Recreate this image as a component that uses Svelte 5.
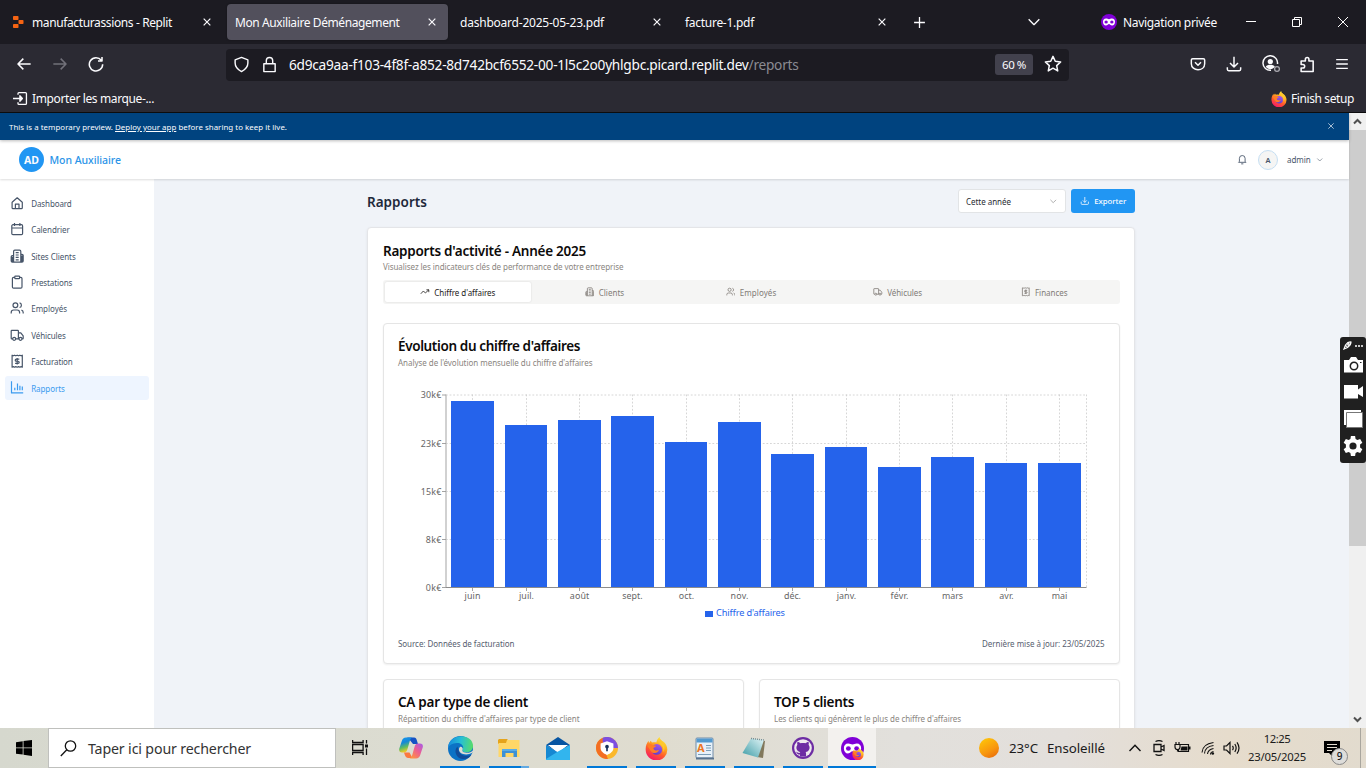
<script>
  // Tunes letter spacing so a label occupies its designed width.
  function fit(node, width) {
    const apply = (w) => {
      node.style.letterSpacing = '0px';
      const natural = node.getBoundingClientRect().width;
      const n = Math.max(1, node.textContent.length);
      node.style.letterSpacing = (w - natural) / n + 'px';
    };
    apply(width);
    return { update: apply };
  }

  const P = {
    home: 'M3.5 10.5 12 3l8.5 7.5M3.5 10v9.5a1.5 1.5 0 0 0 1.500 1.500h14a1.500 1.500 0 0 0 1.500-1.500V10M9 21v-7.500h6V21',
    calendar: 'M5 4.500h14a2 2 0 0 1 2 2V19a2 2 0 0 1-2 2H5a2 2 0 0 1-2-2V6.500a2 2 0 0 1 2-2zM7.500 1.500v5M16.500 1.500v5M3 10h18',
    building: 'M6 22V4a2 2 0 0 1 2-2h8a2 2 0 0 1 2 2v18zM6 11H4a2 2 0 0 0-2 2v7a2 2 0 0 0 2 2h2M18 9h2a2 2 0 0 1 2 2v9a2 2 0 0 1-2 2h-2M9.500 6h5M9.500 10h5M9.500 14h5M9.500 18h5M4 13v8M20 11v10',
    clipboard: 'M9 2h6a1 1 0 0 1 1 1v2a1 1 0 0 1-1 1H9a1 1 0 0 1-1-1V3a1 1 0 0 1 1-1zM16 4h2a2 2 0 0 1 2 2v14a2 2 0 0 1-2 2H6a2 2 0 0 1-2-2V6a2 2 0 0 1 2-2h2',
    users: 'M16 21v-2a4 4 0 0 0-4-4H6a4 4 0 0 0-4 4v2M9 3a4 4 0 1 0 0 8a4 4 0 0 0 0-8M22 21v-2a4 4 0 0 0-3-3.870M16 3.130a4 4 0 0 1 0 7.750',
    truck: 'M4.500 18H3a1 1 0 0 1-1-1V5a1 1 0 0 1 1-1h10a1 1 0 0 1 1 1v13H9.500M14 8h4l4 5v4a1 1 0 0 1-1 1h-1.500M14.500 18h1M7 15.500a2.500 2.500 0 1 0 0 5a2.500 2.500 0 0 0 0-5M17.500 15.500a2.500 2.500 0 1 0 0 5a2.500 2.500 0 0 0 0-5',
    bill: 'M3.500 2v20l2-1 2 1 2.200-1 2.300 1 2.300-1 2.200 1 2-1 2 1V2l-2 1-2-1-2.200 1L12 2 9.700 3 7.500 2l-2 1zM15.500 8.500h-5a1.800 1.800 0 0 0 0 3.600h3a1.800 1.800 0 0 1 0 3.600h-5M12 6.500v11',
    chart: 'M2.500 2v19.500H22M8 17v-4M12.500 17V6M16.500 17V9.500M20.500 17v-6',
    trend: 'm2 17 6.500-7 5 5L22 7M16 7h6v6',
    down: 'M3 14v5a2 2 0 0 0 2 2h14a2 2 0 0 0 2-2v-5M12 2.500V16M7 11l5 5 5-5',
    bell: 'M5.500 10a6.500 6.500 0 0 1 13 0v7l2 2h-17l2-2zM9.500 22.500h5',
    chev: 'm4 8 8 8 8-8',
    x: 'm4 4 16 16M20 4 4 20',
    plus: 'M12 2v20M2 12h20',
    left: 'M22 12H3M11 4l-8 8 8 8',
    right: 'M2 12h19M13 4l8 8-8 8',
    reload: 'M20 6.500A10 10 0 1 0 22 12.500M21 1.500v6h-6',
    shield: 'M12 2 21 5.500V10c0 6-4 9.500-9 12-5-2.500-9-6-9-12V5.500z',
    lock: 'M4 11h16v11H4zM7.500 11V6.500a4.500 4.500 0 0 1 9 0V11',
    star: 'm12 1.800 3 6.600 7.200.8-5.300 4.900 1.400 7.100L12 17.600l-6.300 3.600 1.400-7.100-5.300-4.900 7.200-.8z',
    pocket: 'M4 4h16a2 2 0 0 1 2 2v5.500c0 12-20 12-20 0V6a2 2 0 0 1 2-2zM7.500 9.500l4.500 4.500 4.500-4.500',
    dl: 'M12 1v15M6 10.500l6 6 6-6M2 17v3a2 2 0 0 0 2 2h16a2 2 0 0 0 2-2v-3',
    puzzle: 'M3 22V17h2.500a2.500 2.500 0 0 0 0-5H3V7h6V4.500a2.500 2.500 0 0 1 5 0V7h6v15z',
    menu: 'M2 4.500h20M2 12h20M2 19.500h20',
    importer: 'M8 6V4a1.500 1.500 0 0 1 1.500-1.500H20A1.500 1.500 0 0 1 21.500 4v16a1.500 1.500 0 0 1-1.500 1.500H9.500A1.500 1.500 0 0 1 8 20v-2M0 12h14M11 7.500l4 4.500-4 4.500z'
  };

  const nav = [
    ['home', 'Dashboard', 40.5], ['calendar', 'Calendrier', 38.5], ['building', 'Sites Clients', 44.5],
    ['clipboard', 'Prestations', 41], ['users', 'Employés', 36], ['truck', 'Véhicules', 34.5],
    ['bill', 'Facturation', 41.5], ['chart', 'Rapports', 33.5]
  ];
  const tabs = [
    ['trend', "Chiffre d'affaires", 61], ['building', 'Clients', 25.5], ['users', 'Employés', 36.5],
    ['truck', 'Véhicules', 35], ['bill', 'Finances', 32.5]
  ];
  const months = [
    ['juin', 451, 494, 401, 16], ['juil.', 505, 547, 425, 15], ['août', 558, 601, 420, 19.5],
    ['sept.', 611, 654, 416, 20.5], ['oct.', 665, 707, 442, 15.500], ['nov.', 718, 761, 422, 18],
    ['déc.', 771, 814, 454, 17], ['janv.', 825, 867, 447, 19.500], ['févr.', 878, 921, 467, 18],
    ['mars', 931, 974, 457, 21], ['avr.', 985, 1027, 463, 14.500], ['mai', 1038, 1081, 463, 15.500]
  ];
  const ticks = [['30k€', 395], ['23k€', 443.5], ['15k€', 491.5], ['8k€', 539.5], ['0k€', 587.5]];
  const apps = ['copilot', 'edge', 'files', 'mail', 'guard', 'firefox', 'wordpad', 'notepad', 'github', 'private'];
</script>

{#snippet icon(name, size, sw = 2)}
  <svg class="ic" width={size} height={size} viewBox="0 0 24 24" fill="none" stroke="currentColor" stroke-width={sw} stroke-linejoin="round"><path d={P[name]} /></svg>
{/snippet}

{#snippet firefox(size)}
  <svg class="ic" width={size} height={size} viewBox="0 0 24 24">
    <defs>
      <linearGradient id="ffx" x1=".8" y1="0" x2=".3" y2="1"><stop offset="0" stop-color="#fff044" /><stop offset=".35" stop-color="#ffb01f" /><stop offset=".65" stop-color="#ff5a2c" /><stop offset="1" stop-color="#f5156c" /></linearGradient>
      <linearGradient id="ffp" x1=".7" y1="0" x2=".3" y2="1"><stop offset="0" stop-color="#a259e8" /><stop offset="1" stop-color="#5b3bd0" /></linearGradient>
    </defs>
    <path fill="url(#ffx)" d="M15.500 0c-.2 2 .8 3.200 2.200 4.300l1.300.4c2.600 2 4.300 5 4.300 8.300A11.300 11.300 0 0 1 .7 13.400C.5 9 2 6.300 3.600 4l.6 2.200L6 3.800l1.300 2c2-.6 3.200-.5 4.600 0 .1-2.300 1.500-4.500 3.600-5.800z" />
    <circle cx="12.300" cy="13" r="5.600" fill="url(#ffp)" />
    <path fill="#ff7d25" d="M2.500 9.500C4 7.500 6.500 7.200 8 8.300c1.400.3 3 .4 3.600 1.200-.4 1.200-2.600 1.300-2.900 2.400 1 2.500 3.800 2.300 6 1.700-1.400 3.900-6.500 4.200-8.700.9-1-1.700-2.200-3-3.500-5z" />
    <path fill="#ffc72e" d="M15.500 2c4.800 3.300 6.500 9.700 3.500 14 .8-4-.3-7-4-9z" />
  </svg>
{/snippet}

{#snippet mask(size)}
  <svg class="ic" width={size} height={size} viewBox="0 0 24 24">
    <circle cx="12" cy="12" r="12" fill="#8000d7" />
    <path fill="#fff" d="M7.500 6.800c2 0 3 .9 4.500.9s2.500-.9 4.500-.9c3 0 4.500 2.200 4.500 4.900 0 3.300-1.800 5.500-4.300 5.500-2.600 0-3.200-2.300-4.700-2.300s-2.100 2.300-4.700 2.300C4.800 17.200 3 15 3 11.700c0-2.700 1.500-4.900 4.500-4.900z" />
    <ellipse cx="7.700" cy="12" rx="2.500" ry="2.300" fill="#8000d7" /><ellipse cx="16.300" cy="12" rx="2.500" ry="2.300" fill="#8000d7" />
  </svg>
{/snippet}

<div class="screen">
  <div class="tabstrip">
    <div class="tab first">
      <svg class="fav" width="11" height="12" viewBox="0 0 11 12" fill="#f56413"><rect x="0" y="0" width="5.500" height="4" rx=".8" /><rect x="5.500" y="4" width="5" height="4" rx=".8" /><rect x="0" y="8" width="5.500" height="4" rx=".8" /></svg>
      <span use:fit={140}>manufacturassions - Replit</span><i>{@render icon('x', 10, 2.8)}</i>
    </div>
    <div class="tab on"><span use:fit={164.500}>Mon Auxiliaire Déménagement</span><i>{@render icon('x', 10, 2.8)}</i></div>
    <div class="tab"><span use:fit={144}>dashboard-2025-05-23.pdf</span><i>{@render icon('x', 10, 2.8)}</i></div>
    <div class="tab"><span use:fit={69}>facture-1.pdf</span><i>{@render icon('x', 10, 2.8)}</i></div>
    <div class="plus">{@render icon('plus', 13, 2.4)}</div>
    <div class="tabdown">{@render icon('chev', 16, 2)}</div>
    <div class="priv">{@render mask(16)}<span use:fit={94}>Navigation privée</span></div>
    <div class="win">
      <svg width="10" height="10"><path d="M0 4.500h10" stroke="#fff" /></svg>
      <svg width="10" height="10" fill="none" stroke="#fff"><path d="M.5 2.500h7v7h-7zM2.500 2.500v-2h7v7h-2" /></svg>
      <svg width="10" height="10" fill="none" stroke="#fff"><path d="m0 0 10 10M10 0 0 10" /></svg>
    </div>
  </div>

  <div class="toolbar">
    <div class="navs">
      <span>{@render icon('left', 16, 2.300)}</span><span class="dim">{@render icon('right', 16, 2.300)}</span><span>{@render icon('reload', 16, 2.300)}</span>
    </div>
    <div class="url">
      {@render icon('shield', 17, 2)}
      {@render icon('lock', 17, 2)}
      <div class="addr"><span use:fit={509.500}>6d9ca9aa-f103-4f8f-a852-8d742bcf6552-00-1l5c2o0yhlgbc.picard.replit.dev<em>/reports</em></span></div>
      <b class="zoom"><span use:fit={24}>60 %</span></b>
      {@render icon('star', 18, 2)}
    </div>
    <div class="tools">
      {@render icon('pocket', 16, 2.200)}
      {@render icon('dl', 16, 2.200)}
      <svg class="ic" width="19" height="18" viewBox="0 0 19 18" fill="none" stroke="#fbfbfe" stroke-width="1.500"><path d="M15.500 9A7.300 7.300 0 1 0 9 15.300" /><circle cx="8.300" cy="6.500" r="2.600" fill="#fbfbfe" stroke="none" /><path d="M3.800 11.500c1.500-2.300 7.500-2.300 9 0-2 3.500-7 3.500-9 0z" fill="#fbfbfe" stroke="none" /><circle cx="15" cy="14" r="2.400" stroke="#aaa9b0" stroke-width="1.300" /></svg>
      {@render icon('puzzle', 17, 2.200)}
      {@render icon('menu', 14, 2.400)}
    </div>
  </div>

  <div class="marks">
    {@render icon('importer', 15, 2.100)}<span use:fit={122}>Importer les marque-...</span>
    <div class="finish">{@render firefox(16)}<span use:fit={63}>Finish setup</span></div>
  </div>

  <div class="view">
    <div class="page">
      <div class="banner">
        <p use:fit={278}>This is a temporary preview. <u>Deploy your app</u> before sharing to keep it live.</p>
        {@render icon('x', 8, 2.500)}
      </div>
      <header>
        <div class="logo"><span use:fit={15}>AD</span></div>
        <strong><span use:fit={71.500}>Mon Auxiliaire</span></strong>
        <div class="account">
          {@render icon('bell', 10.500, 2)}
          <div class="avatar">A</div>
          <span use:fit={23.500}>admin</span>
          {@render icon('chev', 7.500, 1.800)}
        </div>
      </header>
      <div class="body">
        <aside>
          {#each nav as [ico, label, w], i}
            <div class="item" class:active={i === 7}>{@render icon(ico, 14.400, 2)}<span use:fit={w}>{label}</span></div>
          {/each}
        </aside>
        <main>
          <div class="head">
            <h1><span use:fit={60}>Rapports</span></h1>
            <div class="select"><span use:fit={45}>Cette année</span>{@render icon('chev', 8.500, 1.900)}</div>
            <div class="export">{@render icon('down', 9.600, 2)}<span use:fit={32}>Exporter</span></div>
          </div>
          <section class="card">
            <h2><span use:fit={203}>Rapports d'activité - Année 2025</span></h2>
            <p class="sub"><span use:fit={240.500}>Visualisez les indicateurs clés de performance de votre entreprise</span></p>
            <div class="tablist">
              {#each tabs as [ico, label, w], i}
                <div class="seg" class:sel={i === 0}>{@render icon(ico, 9.600, 2)}<span use:fit={w}>{label}</span></div>
              {/each}
            </div>
            <article class="panel">
              <h2><span use:fit={182}>Évolution du chiffre d'affaires</span></h2>
              <p class="sub"><span use:fit={194.500}>Analyse de l'évolution mensuelle du chiffre d'affaires</span></p>
              <svg class="chart" width="707" height="250" viewBox="398 380 707 250">
                <g stroke="#ccc" stroke-width=".8" stroke-dasharray="1.800 1.800" fill="none">
                  {#each ticks as [, y]}<path d="M446 {y}H1086.500" />{/each}
                  {#each months as [, a]}<path d="M{a + 21.500} 394.500V587.500" />{/each}
                  <path d="M1086.500 394.500V587.500" />
                </g>
                {#each months as [, a, b, top]}
                  <rect x={a} y={top} width={b - a} height={588 - top} fill="#2563eb" shape-rendering="crispEdges" />
                {/each}
                <path d="M446 394.500V587.500" stroke="#c6c6c6" stroke-width="1.600" />
                <path d="M446 587.500H1086.500" stroke="#8c8c8c" />
                {#each ticks as [t, y]}
                  <path d="M442 {y}h4" stroke="#999" stroke-width=".9" />
                  <text x="441.300" y={y + 3} text-anchor="end" textLength={t.length === 4 ? 20.500 : 15.500}>{t}</text>
                {/each}
                {#each months as [m, a, , , w]}
                  <path d="M{a + 21.500} 588v3" stroke="#999" stroke-width=".9" />
                  <text x={a + 21.500 - w / 2} y="599" textLength={w}>{m}</text>
                {/each}
                <rect x="705" y="611" width="8" height="6" fill="#2563eb" />
                <text x="716" y="616" class="leg" textLength="69">Chiffre d'affaires</text>
              </svg>
              <div class="foot"><span use:fit={116.500}>Source: Données de facturation</span><span use:fit={122.500}>Dernière mise à jour: 23/05/2025</span></div>
            </article>
            <div class="pair">
              <article class="panel">
                <h2><span use:fit={130}>CA par type de client</span></h2>
                <p class="sub"><span use:fit={181.500}>Répartition du chiffre d'affaires par type de client</span></p>
              </article>
              <article class="panel">
                <h2><span use:fit={80}>TOP 5 clients</span></h2>
                <p class="sub"><span use:fit={187}>Les clients qui génèrent le plus de chiffre d'affaires</span></p>
              </article>
            </div>
          </section>
        </main>
      </div>
    </div>
    <div class="scroll">
      <svg width="17" height="17" fill="none" stroke="#505050" stroke-width="2"><path d="m5 10.500 3.500-3.500L12 10.500" /></svg>
      <div class="thumb"></div>
      <svg class="bot" width="17" height="17" fill="none" stroke="#505050" stroke-width="2"><path d="m5 6.500 3.500 3.500L12 6.500" /></svg>
    </div>
  </div>

  <div class="taskbar">
    <div class="start"><svg width="16" height="16"><path d="M0 2.200 6.700 1.300v6.200H0zM7.500 1.100 16 0v7.500H7.500zM0 8.300h6.700v6.300L0 13.700zM7.500 8.300H16V16l-8.500-1.200z" /></svg></div>
    <div class="search">
      <svg width="17" height="17" fill="none" stroke="#111" stroke-width="1.300"><circle cx="10.500" cy="6" r="5.200" /><path d="M6.800 9.800.8 16" /></svg>
      <span use:fit={163}>Taper ici pour rechercher</span>
    </div>
    <div class="view-btn"><svg width="17" height="17" fill="none" stroke="#111" stroke-width="1.300"><path d="M.6 1v2.500h10.500V1M.6 16v-2.500h10.500V16M.6 5.500h10.500v6H.6zM14.500 1v3.500M14.500 9.500V16" /><path d="M13 5.500h3v3h-3z" fill="#111" stroke="none" /></svg></div>
    <div class="apps">
      {#each apps as a}
        <div class="app {a}">
          {#if a === 'copilot'}
            <svg width="24" height="22" viewBox="0 0 24 22">
              <defs>
                <linearGradient id="c1" x2=".3" y2="1"><stop stop-color="#189af0" /><stop offset=".4" stop-color="#1588d8" /><stop offset=".7" stop-color="#5ebc63" /><stop offset="1" stop-color="#f4cb24" /></linearGradient>
                <linearGradient id="c2" x1="1" x2=".2" y2="1"><stop stop-color="#a65bea" /><stop offset=".5" stop-color="#ed5f91" /><stop offset="1" stop-color="#ff9440" /></linearGradient>
              </defs>
              <path fill="#1552c4" d="M8 .5h7c2 0 2.500 1.500 3.200 4l.8 2.500h-5L10 2z" />
              <path fill="url(#c1)" d="M7 .5h6.500c-1.700.5-2.300 2-2.800 3.800L8.500 12c-.6 2-1.400 3.500-3.500 3.500H3C.5 15.500-.3 13.700.3 11.500L2.800 4C3.500 1.800 4.600.5 7 .5z" />
              <path fill="#fb7940" d="M5 15.500h5.500l3 5.500H9c-2.200 0-3-2.300-4-5.500z" />
              <path fill="url(#c2)" d="M17 21.500h-6.500c1.700-.5 2.300-2 2.800-3.800L15.500 10c.6-2 1.400-3.500 3.500-3.500h2c2.500 0 3.300 1.800 2.700 4L21.200 18c-.7 2.200-1.800 3.500-4.200 3.500z" />
            </svg>
          {:else if a === 'edge'}
            <svg width="25" height="25" viewBox="0 0 24 24">
              <defs><linearGradient id="e1" y1=".4" y2=".5"><stop stop-color="#1689dd" /><stop offset=".5" stop-color="#27bfd4" /><stop offset="1" stop-color="#58dc69" /></linearGradient></defs>
              <circle cx="12" cy="12" r="12" fill="#0c72c5" />
              <path fill="url(#e1)" d="M0 11C1-3.500 24-3 24 9.500c0 4.500-4 6.500-7.500 6-2-.3-3.500-1.300-2.500-2.700C16 9.500 12.500 6.500 8.500 6.700 4 7 1.200 9 0 11z" />
              <path fill="#124d99" d="M9 10c-4 4-1 11.500 5 12 4 .3 7-1.500 8.500-4-5 2.500-12 .5-12.500-5z" />
              <path fill="#deddd2" d="M11.500 10.500c-2 2-1 5.500 3 6.800 3 .9 6 .3 8.300-.9.7-.4 1.200-.9 1.200-1.500v-1c-2 2-5 2.600-7.500 2-2-.5-3.500-1.500-2.500-3 .6-1.200-.8-3-2.500-2.400z" />
            </svg>
          {:else if a === 'files'}
            <svg width="22" height="20" viewBox="0 0 22 20"><path fill="#e5a41b" d="M1 1h8.500v5H0V2z" /><path fill="#ffd767" d="M9 2h12.500v17H.500V5H8z" /><path fill="#3c91d6" d="M4 11h15v8h-3.500v-4h-8v4H4z" /><path fill="#59ade7" d="M4 11h15v2H4z" /></svg>
          {:else if a === 'mail'}
            <svg width="24" height="23" viewBox="0 0 24 23"><path fill="#0755a2" d="M0 8 12 0l12 8-12 8z" /><path fill="#fff" d="M2 8h20l-10 8z" /><path fill="#1688d2" d="m0 8 12 7.500L24 8v15H0z" /><path fill="#32b5ee" d="m0 22 12-7.500L24 8v15H0z" /></svg>
          {:else if a === 'guard'}
            <svg width="22" height="22" viewBox="0 0 24 24"><circle cx="12" cy="12" r="12" fill="#fbb82b" /><path fill="#7d4fe0" d="M7 1a12 12 0 0 1 17 11h-5L6 7z" /><path fill="#f36e23" d="M0 12A12 12 0 0 1 7 1l1 9 5 14A12 12 0 0 1 0 12z" /><path fill="#fff" d="m12 4.500 7 2.500v5c0 3.500-3 6-7 7.500-4-1.500-7-4-7-7.500V7z" /><circle cx="12" cy="10.500" r="2" fill="#17325c" /><path stroke="#17325c" stroke-width="1.800" d="M12 11v4.500" /></svg>
          {:else if a === 'firefox'}
            {@render firefox(23)}
          {:else if a === 'wordpad'}
            <svg width="20" height="23" viewBox="0 0 20 23"><rect x="1" y="1" width="17" height="20" rx="1" fill="#e7f1f9" stroke="#718ca8" /><path fill="#5299ce" d="M1.500 1.500h16v4h-16z" /><path stroke="#7b9eb8" d="M11 8.500h5M11 11h5M11 13.500h5M3 17.500h13" /><text x="2" y="14.500" class="wp">A</text><path stroke="#59738f" stroke-width="2" d="M1 21.500h18" /></svg>
          {:else if a === 'notepad'}
            <svg width="24" height="23" viewBox="0 0 24 23"><defs><linearGradient id="n1" x1="1" x2="0" y2="1"><stop stop-color="#e3f6f8" /><stop offset="1" stop-color="#3c9ba5" /></linearGradient></defs><path fill="#81785c" d="m19 3 4 1-2 17-6-1z" /><path fill="url(#n1)" d="M9 1.500 22 3l-6 17.500L.500 16z" /><path stroke="#758c91" stroke-width="1.500" stroke-dasharray="1 1" d="m9 1.500 13 1.500" /></svg>
          {:else if a === 'github'}
            <svg width="22" height="22" viewBox="0 0 24 24"><circle cx="12" cy="12" r="12" fill="#6d2ca3" /><circle cx="12" cy="12" r="9.600" fill="#eee9ee" /><path fill="#6d2ca3" d="M6 5.500c1.500 0 2.500.8 3.300 1.400 1.700-.5 3.700-.5 5.400 0 .8-.6 1.800-1.400 3.300-1.400.5 1.300.4 2.300.1 3 2.300 3.300.8 7.500-3.300 7.900.6.800.6 1.600.6 5H8.600v-2.300c-3.300.6-3.200-2.500-4.600-3 2-.4 2.500 2 4.600 1.200.1-.4.300-.7.500-.9-4-.5-5.500-4.600-3.200-7.900-.3-.7-.4-1.700.1-3z" /></svg>
          {:else}
            {@render mask(23)}<div class="mini">{@render firefox(12)}</div>
          {/if}
        </div>
      {/each}
    </div>
    <div class="sun"></div>
    <span class="temp" use:fit={29}>23°C</span>
    <span class="weather" use:fit={58}>Ensoleillé</span>
    <div class="tray">
      <svg width="12" height="8" fill="none" stroke="#111" stroke-width="1.400"><path d="M.5 7 6 1.200 11.500 7" /></svg>
      <svg width="12" height="16" fill="none" stroke="#111" stroke-width="1.300"><path d="M1 4.500h7v7H1zM8 7l3-1.500v5L8 9M2.500 1.500q3.500-1.700 7 0M2.500 14.500q3.500 1.700 7 0" /></svg>
      <svg width="17" height="12" fill="none" stroke="#111" stroke-width="1.200"><path d="M6 2.500h8.500v7H4.500V8M2 0v2.500M5 0v2.500M1 2.500h5V5a2 2 0 0 1-5 0zM3.500 7v2.500" /><path d="M7.500 4.500h6v4h-7zM15 4.500h1.500v3H15z" fill="#111" stroke="none" /></svg>
      <svg width="14" height="14" fill="none" stroke="#111" stroke-width="1.100"><path d="M1 11.500Q1.500 3 12.500 1.500M3.500 12.500Q4 5.500 12.500 4.500M6.500 13Q7 8.500 12.500 7.500M9.500 13.500q0-2.500 3-3" /><circle cx="11.800" cy="12.500" r="1.300" fill="#111" stroke="none" /></svg>
      <svg width="17" height="14" fill="none" stroke="#111" stroke-width="1.200"><path d="M1 5h2.500L7 1.500v11L3.500 9H1zM9.500 4.800q1.500 2.200 0 4.400M11.800 3q2.700 4 0 8M14 1.300q4 5.700 0 11.400" /></svg>
    </div>
    <div class="clock"><span use:fit={26.500}>12:25</span><span use:fit={58}>23/05/2025</span></div>
    <div class="notif"><svg width="16" height="15"><path d="M0 0h16v12H8v3l-3-3H0z" /><path stroke="#e3dccf" d="M3 3.500h10M3 6.500h10M3 9.500h5" /></svg><b>9</b></div>
    <div class="edge-line"></div>
  </div>

  <div class="capture">
    <div class="top"><svg width="9" height="9" fill="none" stroke="#fff" stroke-width="1.200"><path d="m1 8 1.500-4Q5 .5 8 1q0 3-3.500 5.500zM2.500 4l2 2.500" /><circle cx="5.500" cy="3.500" r=".8" /></svg><i></i><i></i><i></i></div>
    <svg width="19" height="16"><path fill="#fff" d="M0 3h5l2-3h5l2 3h5v12.500H0z" /><circle cx="10" cy="9" r="3.700" fill="none" stroke="#222" stroke-width="1.500" /><path fill="#222" d="M16 5h1.500v1H16z" /></svg>
    <svg width="19" height="14"><path fill="#fff" d="M0 0h14v4.500L19 1v11l-5-3v4.500H0z" /></svg>
    <svg width="19" height="18"><path fill="#fff" d="M0 0h17v3H3v12H0z" /><path fill="#fff" stroke="#777" d="M2.500 2.500h16v15h-16z" /></svg>
    <svg width="20" height="20" viewBox="0 0 24 24"><path fill="#fff" fill-rule="evenodd" d="m9.500 0-.6 3.500-2.200 1.200-3.300-1.200L.8 8l2.700 2.300v3.400L.8 16l2.600 4.500 3.300-1.200 2.200 1.200.6 3.500h5l.6-3.500 2.200-1.200 3.300 1.200 2.600-4.500-2.700-2.300v-3.400L23.200 8l-2.600-4.500-3.300 1.200-2.200-1.200-.6-3.500zM12 7.700a4.300 4.300 0 1 1 0 8.600 4.300 4.300 0 0 1 0-8.600" /></svg>
  </div>
</div>

<style>
  :global(body) { margin: 0; overflow: hidden; }
  * { box-sizing: border-box; }
  .screen { position: relative; width: 1366px; height: 768px; overflow: hidden; display: flex; flex-direction: column; font-family: "Noto Sans", "Open Sans", sans-serif; font-size: 12px; color: #fbfbfe; white-space: nowrap; }
  h1, h2, p { margin: 0; }
  span { display: inline-block; flex: none; }
  .ic { display: block; flex: none; }
  svg { flex: none; }

  .tabstrip { height: 44px; flex: none; background: #1c1b22; display: flex; align-items: center; padding-left: 2px; gap: 4px; }
  .tab { width: 221px; height: 36px; flex: none; display: flex; align-items: center; padding: 0 11px 0 8px; border-radius: 4px; }
  .tab i { margin-left: auto; }
  .tab.on { background: #52505c; box-shadow: 0 0 2px #0006; }
  .tab.first { padding-left: 11px; }
  .fav { margin-right: 8px; }
  .plus { margin-left: 11px; width: 13px; }
  .tabdown { margin-left: 96px; }
  .priv { margin-left: 55px; display: flex; align-items: center; gap: 6px; }
  .win { display: flex; margin-left: 25px; gap: 36px; }

  .toolbar { height: 42px; flex: none; background: #2b2a33; display: flex; align-items: center; }
  .navs { display: flex; gap: 20px; padding: 0 0 2px 16px; width: 226px; }
  .dim { color: #72717a; }
  .url { width: 843px; height: 32px; background: #1c1b22; border-radius: 4px; display: flex; align-items: center; padding: 0 0 2px 7px; gap: 11px; }
  .addr { width: 510px; margin-right: 185px; font-size: 13.700px; color: #fbfbfe; padding-top: 1px; }
  .addr em { font-style: normal; color: #8b8b92; }
  .zoom { width: 38px; height: 21px; background: #42414d; border-radius: 3px; display: flex; justify-content: center; align-items: center; font-weight: 400; font-size: 11.500px; }
  .tools { margin-left: 121px; padding-bottom: 2px; display: flex; align-items: center; gap: 20px; }
  .tools > :global(:nth-child(4)) { margin-left: -2px; }
  .tools > :global(:nth-child(5)) { margin-left: -1px; }
  .marks { height: 27px; flex: none; background: #2b2a33; border-bottom: 1px solid #0c0c0d; display: flex; align-items: center; padding: 0 12px 1px 13px; gap: 4px; }
  .finish { margin-left: auto; display: flex; align-items: center; gap: 4px; }

  .view { height: 615px; flex: none; display: flex; overflow: hidden; }
  .page { width: 1349px; flex: none; display: flex; flex-direction: column; }
  .banner { height: 27px; flex: none; background: #00437f; display: flex; align-items: center; justify-content: space-between; padding: 0 14px 0 9px; font-size: 7.900px; position: relative; z-index: 3; box-shadow: 0 1px 3px #0004; padding-top: 1px; }
  .banner :global(svg) { color: #c8d6e5; margin-top: -3px; }
  header { height: 39px; flex: none; background: #fff; display: flex; align-items: center; padding: 0 26px 0 19px; position: relative; z-index: 2; box-shadow: 0 1px 2px #0002; }
  .logo { width: 25px; height: 25px; border-radius: 50%; background: #2196f3; display: grid; place-items: center; font-size: 10.500px; font-weight: 700; }
  header strong { margin-left: 5.500px; color: #2b94e8; font-weight: 500; font-size: 10.500px; }
  .account { margin-left: auto; display: flex; align-items: center; color: #475569; font-size: 8px; }
  .avatar { width: 20px; height: 20px; border-radius: 50%; background: #f5f5f4; border: 1px solid #c6dff3; display: grid; place-items: center; font-weight: 600; font-size: 7.500px; margin: 0 9px 0 11px; }
  .account > :global(svg:last-child) { margin-left: 5px; }

  .body { flex: 1; min-height: 0; display: flex; background: #f0f3f8; }
  aside { width: 154px; background: #fff; padding: 12px 4.800px; display: flex; flex-direction: column; gap: 2.360px; }
  .item { height: 24px; flex: none; display: flex; align-items: center; gap: 7px; padding-left: 5px; border-radius: 3px; color: #475569; font-size: 8px; }
  .item span { padding-top: 1px; }
  .item.active { background: #eef5ff; color: #3b9bef; }

  main { margin-left: 213px; width: 768px; flex: none; padding-top: 10px; }
  .head { height: 24px; display: flex; align-items: center; margin-bottom: 14px; }
  h1 { flex: 1; color: #1e293b; font-size: 13.500px; font-weight: 600; padding-top: 1px; }
  .select { width: 108px; height: 24px; background: #fff; border: 1px solid #e2e4e6; border-radius: 3px; display: flex; align-items: center; justify-content: space-between; padding: 0 8px 0 7px; color: #292c33; font-size: 8px; }
  .select :global(svg) { color: #888; }
  .export { margin-left: 5px; width: 64px; height: 24px; border-radius: 3px; background: #2196f3; display: flex; align-items: center; justify-content: center; gap: 5px; font-size: 7.800px; font-weight: 500; }
  .card { height: 540px; background: #fff; border: 1px solid #e4e5e8; border-radius: 4px; padding: 14px 14.500px; box-shadow: 0 1px 3px #0001; color: #0c0a09; }
  h2 { height: 19px; line-height: 19px; font-size: 13.500px; font-weight: 600; padding-left: .5px; }
  .sub { height: 12px; line-height: 12px; font-size: 8px; color: #8a8580; padding-left: .5px; }
  .tablist { margin-top: 7px; height: 24px; background: #f5f5f4; border-radius: 3px; padding: 2px; display: grid; grid-template-columns: repeat(5, 1fr); }
  .seg { display: flex; align-items: center; justify-content: center; gap: 4.500px; height: 20px; border-radius: 2px; color: #817c77; font-size: 8px; }
  .seg.sel { background: #fff; color: #1c1917; box-shadow: 0 0 2px #0002; }
  .panel { border: 1px solid #e5e5e5; border-radius: 4px; box-shadow: 0 1px 2px #0001; padding: 13px 14px; background: #fff; }
  .tablist + .panel { margin-top: 19px; height: 341px; }
  .panel .sub { margin-top: 1px; }
  .chart { display: block; margin-top: 11px; }
  text { font-size: 8.900px; fill: #666; }
  .leg { fill: #2563eb; font-size: 9.200px; }
  .foot { margin-top: 8px; display: flex; justify-content: space-between; font-size: 8px; color: #57606f; line-height: 12px; padding-left: .5px; }
  .pair { margin-top: 15px; display: grid; grid-template-columns: 361px 361px; justify-content: space-between; }
  .pair .panel { height: 100px; }

  .scroll { width: 17px; background: #f0f0f0; display: flex; flex-direction: column; }
  .thumb { height: 416px; background: #cdcdcd; }
  .bot { margin-top: auto; }

  .taskbar { height: 40px; flex: none; background: linear-gradient(90deg, #d6d8ce 0%, #dcdcd1 30%, #dfdccf 48%, #e2e0dc 66%, #e3dfdb 78%, #e6dccc 90%, #e2dbce 100%); color: #1b1b1b; display: flex; align-items: center; }
  .start { width: 48px; display: grid; place-items: center; }
  .search { width: 288px; height: 40px; background: #fff; border: 1px solid #bfc0bd; display: flex; align-items: center; padding-left: 11px; gap: 11px; font-size: 14.200px; color: #333; }
  .view-btn { width: 51px; padding-left: 16px; padding-top: 2px; }
  .apps { display: grid; grid-template-columns: repeat(10, 48px); gap: 1px; height: 40px; }
  .app { position: relative; display: grid; place-items: center; height: 40px; }
  .app::after { content: ""; position: absolute; left: 4px; right: 4px; bottom: 0; height: 2px; background: #0078d7; }
  .copilot::after, .mail::after { display: none; }
  .files::after { background: linear-gradient(90deg, #0078d7 80%, #62a9e2 80%); }
  .private { background: #f3f1ee; }
  .private::after { left: 0; right: 0; }
  .mini { position: absolute; left: 24px; top: 20px; }
  .wp { font-size: 11px; font-weight: 700; fill: #ed7623; }
  .sun { width: 20px; height: 20px; border-radius: 50%; background: linear-gradient(150deg, #ffcc0a, #f8960d 60%, #e5630c); margin-left: 103px; }
  .temp { margin-left: 10px; font-size: 13.300px; }
  .weather { margin-left: 9px; font-size: 13.300px; }
  .tray { margin-left: 24px; display: flex; align-items: center; gap: 12px; width: 116px; }
  .tray > :nth-child(3) { margin-left: -3px; }
  .tray > :nth-child(4) { margin-left: -2px; }
  .tray > :nth-child(5) { margin-left: -4px; }
  .clock { width: 58px; margin-left: 3px; display: flex; flex-direction: column; align-items: center; font-size: 11.300px; line-height: 18px; }
  .notif { position: relative; width: 16px; height: 15px; margin-left: 18px; }
  .notif svg { display: block; }
  .notif b { position: absolute; left: 7px; top: 7px; width: 17px; height: 17px; border: 1px solid #888; border-radius: 50%; background: #deddda; display: grid; place-items: center; font-size: 10px; font-weight: 500; }
  .edge-line { margin-left: 20px; width: 1px; height: 40px; background: #a9a69e; }

  .capture { position: absolute; left: 1340px; top: 337px; width: 26px; height: 126px; background: #202020; border-radius: 3px; display: flex; flex-direction: column; align-items: center; z-index: 5; }
  .capture .top { display: flex; align-items: center; gap: 1px; height: 17px; }
  .capture .top svg { margin-right: 2px; }
  .capture .top i { width: 2px; height: 2px; background: #fff; border-radius: 1px; }
  .capture > svg { margin: 3px 0 0; }
  .capture > svg:nth-child(3) { margin-top: 12px; }
  .capture > svg:nth-child(4) { margin-top: 11px; }
  .capture > svg:nth-child(5) { margin-top: 8px; }
</style>
